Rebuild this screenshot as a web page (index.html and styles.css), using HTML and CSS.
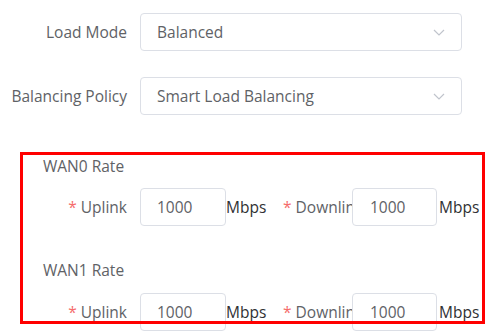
FILE: index.html
```html
<!DOCTYPE html>
<html>
<head>
<meta charset="utf-8">
<link rel="stylesheet" href="styles.css">
</head>
<body>
<div class="form">
  <div class="row">
    <div class="label">Load Mode</div>
    <div class="select"><span>Balanced</span><svg class="chev" width="12" height="7" viewBox="0 0 12 7"><path d="M1 1 L6 6 L11 1" fill="none" stroke="#c0c4cc" stroke-width="1.2"/></svg></div>
  </div>
  <div class="row">
    <div class="label">Balancing Policy</div>
    <div class="select"><span>Smart Load Balancing</span><svg class="chev" width="12" height="7" viewBox="0 0 12 7"><path d="M1 1 L6 6 L11 1" fill="none" stroke="#c0c4cc" stroke-width="1.2"/></svg></div>
  </div>

  <div class="rates">
    <div class="group">
      <div class="title">WAN0 Rate</div>
      <div class="rate-row">
        <div class="rlabel"><span class="req">*</span> Uplink</div>
        <div class="num">1000</div>
        <div class="unit">Mbps</div>
        <div class="dlabel"><span class="req">*</span> Downlink</div>
        <div class="num num2">1000</div>
        <div class="unit unit2">Mbps</div>
      </div>
    </div>
    <div class="group group2">
      <div class="title">WAN1 Rate</div>
      <div class="rate-row">
        <div class="rlabel"><span class="req">*</span> Uplink</div>
        <div class="num">1000</div>
        <div class="unit">Mbps</div>
        <div class="dlabel"><span class="req">*</span> Downlink</div>
        <div class="num num2">1000</div>
        <div class="unit unit2">Mbps</div>
      </div>
    </div>
    <div class="frame"></div>
  </div>
</div>
</body>
</html>
```

FILE: styles.css
```css
html, body {
  margin: 0;
  padding: 0;
  background: #fff;
}
body {
  font-family: "Open Sans", "Noto Sans", sans-serif;
  font-size: 15.5px;
  color: #606266;
  width: 497px;
  height: 333px;
  overflow: hidden;
}
.form {
  padding-top: 13px;
}
.row {
  display: flex;
  align-items: center;
  height: 38px;
  margin-bottom: 26px;
}
.row + .row {
  margin-bottom: 0;
}
.label {
  width: 127px;
  text-align: right;
  padding-right: 13px;
  white-space: nowrap;
}
.select {
  box-sizing: border-box;
  width: 322px;
  height: 38px;
  border: 1px solid #dcdfe6;
  border-radius: 4px;
  padding: 0 14px 0 16px;
  display: flex;
  align-items: center;
  justify-content: space-between;
}
.chev {
  display: block;
  margin-right: 2px;
}
.rates {
  position: relative;
  margin-top: 37px;
  padding-left: 43px;
}
.title {
  height: 22px;
  line-height: 22px;
  padding-top: 3px;
}
.rate-row {
  display: flex;
  align-items: center;
  height: 38px;
  margin-top: 11px;
  margin-left: -43px;
}
.group2 {
  margin-top: 30px;
}
.group2 .rate-row {
  margin-top: 12px;
}
.rlabel {
  width: 127px;
  text-align: right;
  padding-right: 13px;
  white-space: nowrap;
}
.req {
  color: #f56c6c;
}
.num {
  box-sizing: border-box;
  width: 86px;
  height: 38px;
  border: 1px solid #dcdfe6;
  border-radius: 4px;
  padding-left: 16px;
  display: flex;
  align-items: center;
  background: #fff;
}
.num2 {
  width: 85px;
  padding-left: 17px;
}
.unit {
  width: 57px;
  color: #303133;
}
.unit2 {
  width: auto;
  padding-left: 2px;
}
.dlabel {
  width: 69px;
  overflow: hidden;
  white-space: nowrap;
}
.frame {
  position: absolute;
  left: 20px;
  top: 0;
  width: 459px;
  height: 166px;
  border: 3px solid #ff0000;
  pointer-events: none;
}
```
